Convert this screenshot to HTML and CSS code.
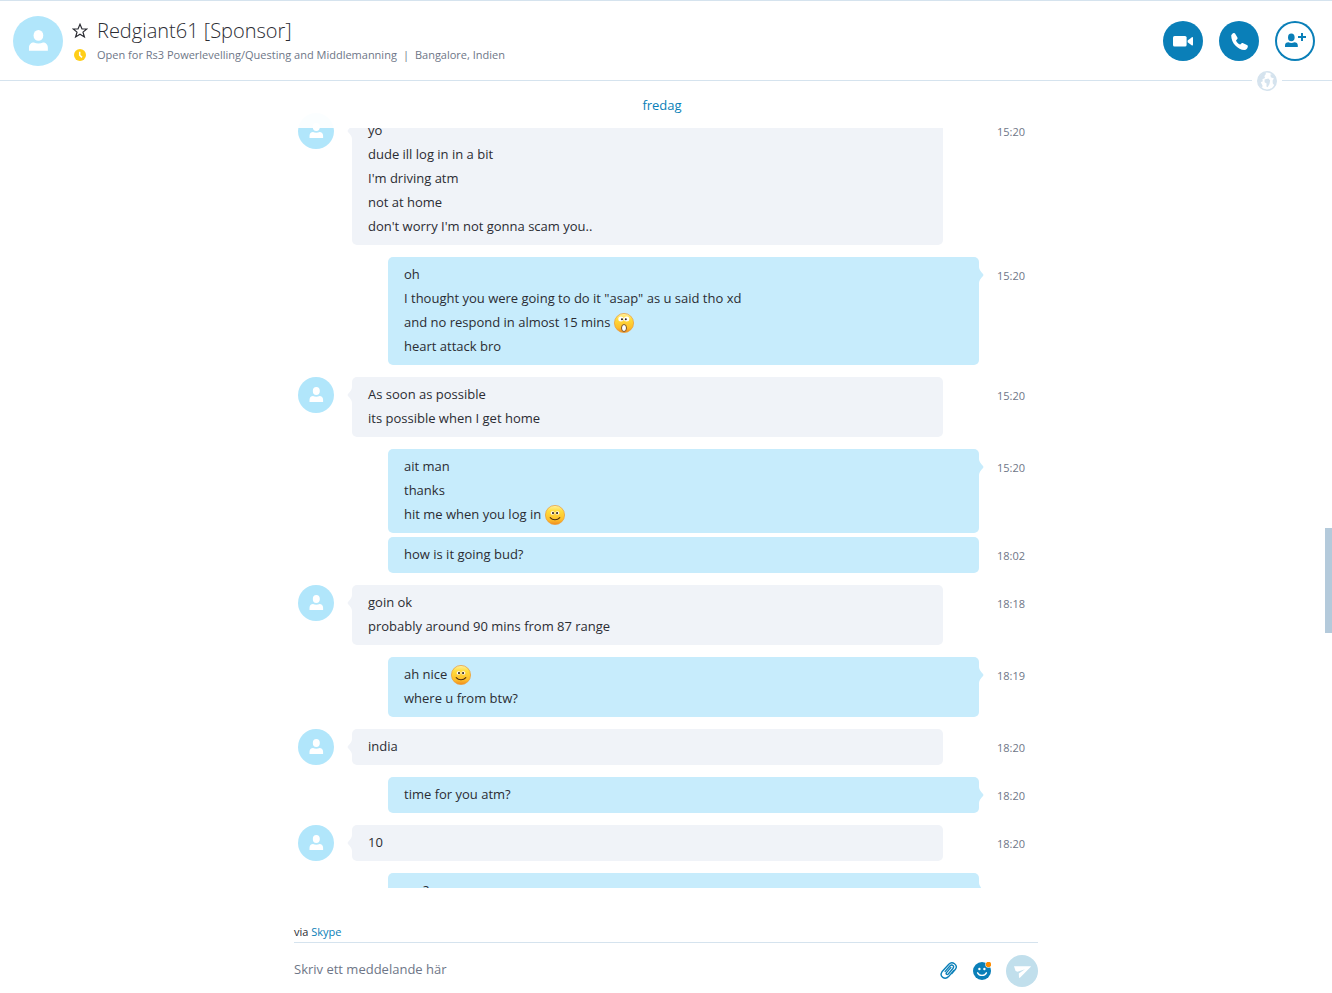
FILE: index.html
```html
<!DOCTYPE html>
<html lang="sv">
<head>
  <meta charset="UTF-8" />
  <meta name="viewport" content="width=device-width, initial-scale=1.0"/>
  <title>Skype - Redgiant61</title>
  <link rel="stylesheet" href="styles.css">
</head>
<body>
  <!-- Icons -->
  <svg class="sprite" aria-hidden="true">
    <defs>
      <linearGradient id="face" x1="0" y1="0" x2="0" y2="1">
        <stop offset="0" stop-color="#fff0a0"/>
        <stop offset="0.3" stop-color="#ffdc3c"/>
        <stop offset="0.75" stop-color="#fdbf2a"/>
        <stop offset="1" stop-color="#f08a20"/>
      </linearGradient>
      <symbol id="person" viewBox="0 0 36 36">
        <ellipse cx="18.3" cy="14" rx="3.5" ry="3.9"/>
        <path d="M11.5 25V22.8C11.5 20.4 13 19 15 19C17 20 19.6 20 21.6 19C23.6 19 25.1 20.4 25.1 22.8V25Z"/>
      </symbol>
      <symbol id="smile" viewBox="0 0 20 20">
        <circle cx="10" cy="10" r="9.6" fill="url(#face)" stroke="#ee9a2e" stroke-width="0.7"/>
        <ellipse cx="7.6" cy="8" rx="2" ry="1.8" fill="#fff"/>
        <ellipse cx="12.4" cy="8" rx="2" ry="1.8" fill="#fff"/>
        <circle cx="8" cy="8.1" r="1.1" fill="#3a2a1c"/>
        <circle cx="12.1" cy="8.1" r="1.1" fill="#3a2a1c"/>
        <path d="M5.2 12.6C7.5 15.4 12.5 15.4 14.8 12.6" fill="none" stroke="#503010" stroke-width="1.1" stroke-linecap="round"/>
      </symbol>
      <symbol id="shock" viewBox="0 0 20 20">
        <circle cx="10" cy="10" r="9.6" fill="url(#face)" stroke="#ee9a2e" stroke-width="0.7"/>
        <ellipse cx="7" cy="6" rx="2.7" ry="2.5" fill="#fff"/>
        <ellipse cx="12.6" cy="6" rx="2.7" ry="2.5" fill="#fff"/>
        <circle cx="8" cy="6.3" r="1" fill="#2c2018"/>
        <circle cx="11.8" cy="6.3" r="1" fill="#2c2018"/>
        <ellipse cx="10" cy="15" rx="2.5" ry="3.5" fill="#fff" stroke="#6a4212" stroke-width="0.9"/>
      </symbol>
    </defs>
  </svg>

  <header class="header">
    <div class="avatar avatar-large"><svg><use href="#person"/></svg></div>
    <div class="contact">
      <button class="favorite" aria-label="Favorit">
        <svg viewBox="0 0 16 16"><path d="M8 1.3L10 6H14.8L11 9.1L12.4 14L8 11.2L3.6 14L5 9.1L1.2 6H6Z" fill="none" stroke="#2b2c33" stroke-width="1.2"/></svg>
      </button>
      <h1>Redgiant61 [Sponsor]</h1>
      <svg class="presence" viewBox="0 0 12 12"><circle cx="6" cy="6" r="6" fill="#ffce17"/><path d="M5.7 2.8V6.2L8 8.4" fill="none" stroke="#fff" stroke-width="1.5"/></svg>
      <p class="mood"><span>Open for Rs3 Powerlevelling/Questing and Middlemanning</span><span>|</span><span>Bangalore, Indien</span></p>
    </div>
    <div class="calls">
      <button class="call" aria-label="Videosamtal">
        <svg viewBox="0 0 40 40"><rect x="10" y="15" width="13.6" height="10.6" rx="1.6" fill="#fff"/><path d="M24.6 19.4L28.6 16.4Q30 15.6 30 17V23.6Q30 25 28.6 24.2L24.6 21.2Z" fill="#fff"/></svg>
      </button>
      <button class="call" aria-label="Ring">
        <svg viewBox="0 0 40 40"><path d="M12.2 14.4C12.6 13.2 13.6 12.2 14.8 11.9C15.5 11.8 15.9 12.1 16.2 12.7L18.4 16.5C18.8 17.2 18.6 17.7 18.1 18.2L17 19.4C17.9 21.4 19.2 22.8 21.2 23.5L22.6 22.3C23.1 21.9 23.6 21.9 24.2 22.2L28 24.1C28.7 24.5 28.9 25 28.8 25.7C28.5 27.5 27.2 28.7 25.4 29C19 28.5 12.2 22.3 12.2 14.4Z" fill="#fff"/></svg>
      </button>
      <button class="call call-outline" aria-label="Lägg till personer">
        <svg viewBox="0 0 40 40" fill="#0a7fb8"><ellipse cx="16.3" cy="16.4" rx="3.3" ry="3.8"/><path d="M10 26V24.4C10 22.4 11.4 21.2 13.4 21.2C15.2 22.2 17.6 22.2 19.4 21.2C21.4 21.2 22.8 22.4 22.8 24.4V26Z"/><path d="M26 12H28V15H31V17H28V20H26V17H23V15H26Z"/></svg>
      </button>
    </div>
    <span class="globe">
      <svg viewBox="0 0 20 20"><circle cx="10" cy="10" r="9.2" fill="#fff" stroke="#d5e3ee" stroke-width="1.6"/><path d="M2 6L5.5 2L9 1.2L8.6 3.4L7.4 5L8 7L5.4 8.2L5.8 10.2L3.8 11.2L5.6 14.8L5 17L1.6 13.4L.8 9Z" fill="#d5e3ee"/><path d="M7.6 8.4L11.4 7.6L13.2 9.4L12.4 13.2L10.6 16.2L9.4 15.6L9.6 12.4L7.6 11.2Z" fill="#d5e3ee"/><path d="M13.4 3.4L15.6 3L18.6 6.6L19.4 11L17.8 14.8L15.8 12.6L15.6 9.6L17 7.6L13.8 6.2Z" fill="#d5e3ee"/></svg>
    </span>
  </header>

  <main class="chat">
    <div class="day"><span>fredag</span></div>

    <div class="messages">
      <div class="row">
        <div class="avatar"><svg><use href="#person"/></svg></div>
        <div class="bubble tail"><p>yo</p><p>dude ill log in in a bit</p><p>I'm driving atm</p><p>not at home</p><p>don't worry I'm not gonna scam you..</p></div>
        <time>15:20</time>
      </div>
      <div class="row mine">
        <div class="bubble tail"><p>oh</p><p>I thought you were going to do it "asap" as u said tho xd</p><p>and no respond in almost 15 mins <svg class="emoji"><use href="#shock"/></svg></p><p>heart attack bro</p></div>
        <time>15:20</time>
      </div>
      <div class="row">
        <div class="avatar"><svg><use href="#person"/></svg></div>
        <div class="bubble tail"><p>As soon as possible</p><p>its possible when I get home</p></div>
        <time>15:20</time>
      </div>
      <div class="row mine">
        <div class="bubble tail"><p>ait man</p><p>thanks</p><p>hit me when you log in <svg class="emoji"><use href="#smile"/></svg></p></div>
        <time>15:20</time>
      </div>
      <div class="row mine follow">
        <div class="bubble"><p>how is it going bud?</p></div>
        <time>18:02</time>
      </div>
      <div class="row">
        <div class="avatar"><svg><use href="#person"/></svg></div>
        <div class="bubble tail"><p>goin ok</p><p>probably around 90 mins from 87 range</p></div>
        <time>18:18</time>
      </div>
      <div class="row mine">
        <div class="bubble tail"><p>ah nice <svg class="emoji"><use href="#smile"/></svg></p><p>where u from btw?</p></div>
        <time>18:19</time>
      </div>
      <div class="row">
        <div class="avatar"><svg><use href="#person"/></svg></div>
        <div class="bubble tail"><p>india</p></div>
        <time>18:20</time>
      </div>
      <div class="row mine">
        <div class="bubble tail"><p>time for you atm?</p></div>
        <time>18:20</time>
      </div>
      <div class="row">
        <div class="avatar"><svg><use href="#person"/></svg></div>
        <div class="bubble tail"><p>10</p></div>
        <time>18:20</time>
      </div>
      <div class="row mine">
        <div class="bubble tail"><p>am?</p></div>
      </div>
    </div>
  </main>
  <div class="scroll-thumb"></div>

  <footer class="composer">
    <p class="via">via <a href="#">Skype</a></p>
    <form class="compose-row">
      <input type="text" aria-label="Meddelande" placeholder="Skriv ett meddelande här" />
      <button type="button" class="tool" aria-label="Bifoga fil">
        <svg viewBox="0 0 18 18"><path d="M5.2 9.4L9.9 4C12 1.8 14.8 4 12.9 6.5L8.3 11.9C7 13.2 5.5 11.9 6.5 10.6L10.8 5.6M13.6 8.6L8.6 14.6C4.8 18.6-1 14.4 2 9.8L8.8 2.2C12.4-1.2 18.2 2.8 15.6 7L11.8 11.6" fill="none" stroke="#0a7fb8" stroke-width="1.4" stroke-linecap="round"/></svg>
      </button>
      <button type="button" class="tool" aria-label="Uttryckssymboler">
        <svg viewBox="0 0 18 18"><circle cx="9" cy="9" r="9" fill="#0a7fb8"/><circle cx="6.4" cy="7" r="1.2" fill="#fff"/><circle cx="11.4" cy="7" r="1.2" fill="#fff"/><path d="M4.6 10.8C6.4 14.2 11.6 14.2 13.4 10.8" fill="none" stroke="#fff" stroke-width="1.4" stroke-linecap="round"/><circle cx="15.5" cy="2.5" r="3.2" fill="#fff"/><circle cx="15.5" cy="2.5" r="2.7" fill="#ff8c00"/></svg>
      </button>
      <button type="submit" class="send" aria-label="Skicka">
        <svg viewBox="0 0 32 32"><path d="M8 11.2H24.4Q25.4 11.2 24.6 12L14.2 22.6Q13.2 23.4 13 22.2L12.8 18.4L19 14.2L11.6 16.8L9.6 16Z" fill="#fff"/></svg>
      </button>
    </form>
  </footer>
</body>
</html>
```
FILE: styles.css
```css
* {
  box-sizing: border-box;
}

body {
  display: flex;
  flex-direction: column;
  height: 100vh;
  margin: 0;
  overflow: hidden;
  background-color: #fff;
  color: #2b2c33;
  font-family: "Open Sans", "Noto Sans", sans-serif;
  font-size: 13px;
}

h1, p {
  margin: 0;
}

button {
  padding: 0;
  border: none;
  background: none;
  cursor: pointer;
}

svg {
  display: block;
  width: 100%;
  height: 100%;
}

.sprite {
  position: absolute;
  width: 0;
  height: 0;
}

/* Header */
.header {
  position: relative;
  display: flex;
  flex: none;
  align-items: center;
  gap: 8px;
  height: 81px;
  padding: 0 17px 0 13px;
  border-top: 1px solid #d5e3ee;
  border-bottom: 1px solid #d5e3ee;
}

.avatar {
  flex: none;
  width: 36px;
  height: 36px;
  border-radius: 50%;
  background-color: #b1e6fb;
  fill: #fff;
}

.avatar-large {
  width: 50px;
  height: 50px;
}

.contact {
  display: grid;
  grid-template-columns: 18px auto;
  column-gap: 8px;
  align-items: center;
  justify-items: center;
  padding-bottom: 2px;
}

.favorite {
  width: 16px;
  height: 16px;
}

.presence {
  width: 12px;
  height: 12px;
}

h1 {
  justify-self: start;
  font-size: 20px;
  font-weight: 300;
  line-height: 30px;
}

.mood {
  display: flex;
  justify-self: start;
  gap: 6px;
  color: #6e7687;
  font-size: 11px;
  line-height: 18px;
}

.calls {
  display: flex;
  gap: 16px;
  margin-left: auto;
}

.call {
  width: 40px;
  height: 40px;
  border-radius: 50%;
  background-color: #0a7fb8;
}

.call-outline {
  background-color: #fff;
  box-shadow: inset 0 0 0 2px #0a7fb8;
}

.globe {
  position: absolute;
  right: 50px;
  bottom: -11px;
  z-index: 3;
  width: 30px;
  height: 20px;
  background-color: #fff;
}

/* Messages */
.chat {
  flex: 1;
  min-height: 0;
  padding-right: 8px;
  overflow: hidden;
}

.day {
  position: relative;
  z-index: 2;
  height: 47px;
  margin-bottom: -15px;
  background-color: rgba(255, 255, 255, 0.95);
  color: #0a7fb8;
  line-height: 48px;
  text-align: center;
}

.messages {
  max-width: 728px;
  margin: 0 auto;
}

.row {
  display: flex;
  margin-bottom: 12px;
  padding-right: 83px;
}

.row .avatar {
  margin-right: 18px;
}

.row time {
  width: 28px;
  margin: 0 -82px 0 54px;
  padding-top: 2px;
  color: #6e7687;
  font-size: 11px;
  line-height: 34px;
}

.mine {
  padding-right: 47px;
  padding-left: 90px;
}

.mine time {
  margin: 0 -46px 0 18px;
}

.follow {
  margin-top: -8px;
}

.bubble {
  position: relative;
  flex: 1;
  padding: 5px 16px 7px;
  border-radius: 5px;
  background-color: #f0f3f8;
}

.mine .bubble {
  background-color: #c7ecfc;
}

.bubble p {
  line-height: 24px;
}

.tail::before {
  content: "";
  position: absolute;
  top: 10px;
  left: -5px;
  width: 5px;
  height: 16px;
  background-color: inherit;
  clip-path: path("M5 0Q5 3 1 7Q0 8 1 9Q5 13 5 16Z");
}

.mine .tail::before {
  right: -5px;
  left: auto;
  transform: scaleX(-1);
}

.emoji {
  display: inline-block;
  width: 20px;
  height: 20px;
  margin: -5px 0 -3px;
  vertical-align: middle;
}

.scroll-thumb {
  position: fixed;
  top: 528px;
  right: 0;
  width: 7px;
  height: 105px;
  background-color: #b4cadb;
}

/* Composer */
.composer {
  flex: none;
  width: 100%;
  max-width: 744px;
  height: 105px;
  margin: 0 auto;
  padding-top: 34px;
}

.via {
  padding-bottom: 1px;
  border-bottom: 1px solid #d5e3ee;
  font-size: 11px;
  line-height: 19px;
}

.via a {
  color: #0a7fb8;
  text-decoration: none;
}

.compose-row {
  display: flex;
  align-items: center;
  gap: 15px;
  height: 56px;
}

.compose-row input {
  flex: 1;
  height: 32px;
  padding: 0 0 4px;
  border: none;
  outline: none;
  font: inherit;
}

.compose-row input::placeholder {
  color: #6e7687;
}

.tool {
  width: 18px;
  height: 18px;
}

.send {
  width: 32px;
  height: 32px;
  border-radius: 50%;
  background-color: #c1dfec;
}
```
